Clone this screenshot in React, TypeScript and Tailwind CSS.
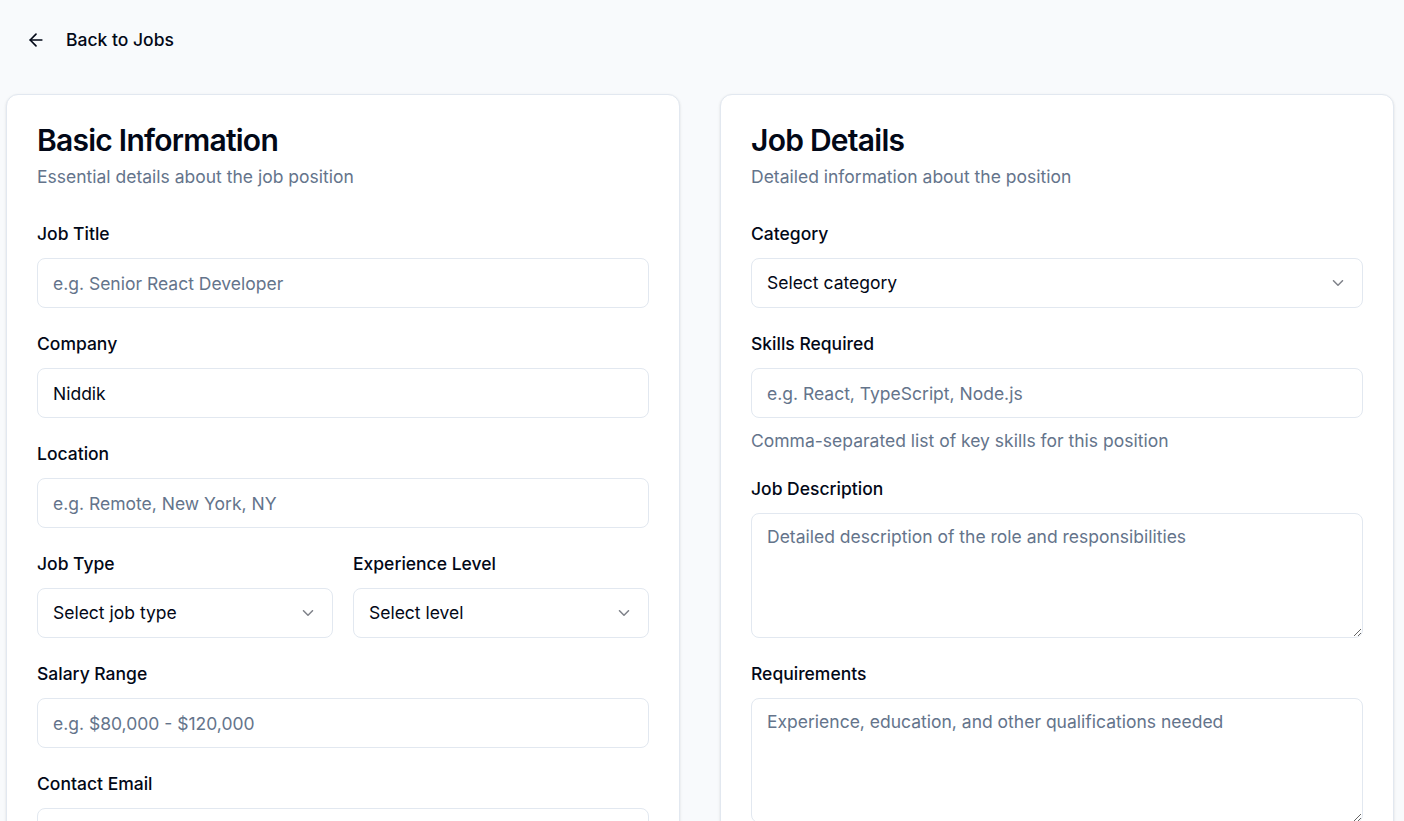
import React from "react";
import { ArrowLeft, ChevronDown } from "lucide-react";

const inputCls =
  "w-full h-[50px] rounded-lg border border-[#e2e8f0] bg-white px-[15px] text-[17.5px] text-[#020817] placeholder:text-[#64748b] outline-none";

function Label({ children }: { children: React.ReactNode }) {
  return <label className="block pt-px text-[17.5px] leading-6 font-medium text-[#020817]">{children}</label>;
}

function Field({ label, children }: { label: string; children: React.ReactNode }) {
  return (
    <div className="flex flex-col gap-[12px]">
      <Label>{label}</Label>
      {children}
    </div>
  );
}

function Select({ text }: { text: string }) {
  return (
    <div className="w-full h-[50px] rounded-lg border border-[#e2e8f0] bg-white px-[15px] flex items-center justify-between">
      <span className="text-[17.5px] text-[#020817]">{text}</span>
      <ChevronDown className="w-[18px] h-[18px] text-[#020817] opacity-50" />
    </div>
  );
}

function Card({ title, subtitle, children }: { title: string; subtitle: string; children: React.ReactNode }) {
  return (
    <div className="rounded-xl border border-[#e2e8f0] bg-white shadow-sm p-[30px] pb-[40px]">
      <h2 className="text-[30px] leading-[30px] font-semibold tracking-tight text-[#020817]">{title}</h2>
      <p className="mt-[10px] text-[17.5px] leading-6 text-[#64748b]">{subtitle}</p>
      <div className="mt-[32px] flex flex-col gap-[23px]">{children}</div>
    </div>
  );
}

const taCls =
  "w-full h-[125px] rounded-lg border border-[#e2e8f0] bg-white px-[15px] py-[11px] text-[17.5px] leading-6 text-[#020817] placeholder:text-[#64748b] outline-none";

export default function App() {
  return (
    <div className="min-h-screen bg-[#f8fafc]" style={{ fontFamily: "Inter, 'Noto Sans', sans-serif" }}>
      <div className="pl-[26px] pt-[28px] h-[94px] box-border">
        <button className="flex items-center h-6 gap-[20px] text-[#020817]">
          <ArrowLeft className="w-5 h-5" />
          <span className="text-[17.5px] font-medium">Back to Jobs</span>
        </button>
      </div>
      <div className="pl-[6px] pr-[10px] grid grid-cols-2 gap-10">
        <Card title="Basic Information" subtitle="Essential details about the job position">
          <Field label="Job Title">
            <input className={inputCls} placeholder="e.g. Senior React Developer" />
          </Field>
          <Field label="Company">
            <input className={inputCls} defaultValue="Niddik" />
          </Field>
          <Field label="Location">
            <input className={inputCls} placeholder="e.g. Remote, New York, NY" />
          </Field>
          <div className="grid grid-cols-2 gap-5">
            <Field label="Job Type">
              <Select text="Select job type" />
            </Field>
            <Field label="Experience Level">
              <Select text="Select level" />
            </Field>
          </div>
          <Field label="Salary Range">
            <input className={inputCls} placeholder="e.g. $80,000 - $120,000" />
          </Field>
          <Field label="Contact Email">
            <input className={inputCls} placeholder="e.g. hr@company.com" />
          </Field>
        </Card>
        <Card title="Job Details" subtitle="Detailed information about the position">
          <Field label="Category">
            <Select text="Select category" />
          </Field>
          <div className="flex flex-col">
            <Field label="Skills Required">
              <input className={inputCls} placeholder="e.g. React, TypeScript, Node.js" />
            </Field>
            <p className="mt-[11px] text-[17.5px] leading-6 text-[#64748b]">
              Comma-separated list of key skills for this position
            </p>
          </div>
          <Field label="Job Description">
            <textarea className={taCls} placeholder="Detailed description of the role and responsibilities" />
          </Field>
          <Field label="Requirements">
            <textarea className={taCls} placeholder="Experience, education, and other qualifications needed" />
          </Field>
        </Card>
      </div>
    </div>
  );
}
